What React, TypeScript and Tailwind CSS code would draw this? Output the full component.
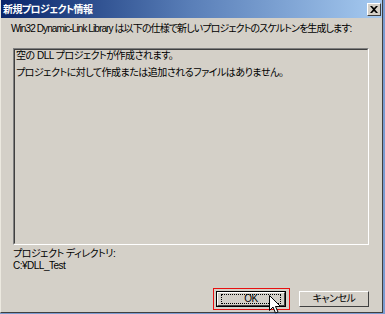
import React from 'react';

const font = "font-['Liberation_Sans','Noto_Sans_CJK_JP',sans-serif] [font-feature-settings:'palt'] text-[10px] leading-[12px] tracking-[-0.5px] text-black";

const CloseButton = () => (
  <div className="w-[14px] h-[13px] bg-[#d4d0c8] border border-t-white border-l-white border-r-[#404040] border-b-[#404040] flex items-center justify-center">
    <svg width="8" height="7" viewBox="0 0 8 7">
      <path d="M0 0 L2 0 L4 2 L6 0 L8 0 L5 3.5 L8 7 L6 7 L4 5 L2 7 L0 7 L3 3.5 Z" fill="#000" />
    </svg>
  </div>
);

const Button = ({ label, active }: { label: string; active?: boolean }) => (
  <div className={`w-[70px] h-[16px] bg-[#d4d0c8] ${active ? 'border border-black' : ''}`}>
    <div className="w-full h-full border border-t-white border-l-white border-r-[#404040] border-b-[#404040] flex items-center justify-center">
      {active ? (
        <div className="w-[60px] h-[10px] border border-dotted border-black flex items-center justify-center">
          <span className={font}>{label}</span>
        </div>
      ) : (
        <span className={font}>{label}</span>
      )}
    </div>
  </div>
);

export default function App() {
  return (
    <div className="relative w-[385px] h-[314px] bg-[#7a9bd0] overflow-hidden">
      <div className="w-[383px] h-[313px] bg-[#d4d0c8] border-l border-l-[#ece9e0] border-r border-r-[#404040] border-b border-b-[#404040] flex flex-col">
        <div className="h-[18px] bg-gradient-to-r from-[#0a246a] via-[#5a7fb8] to-[#a6caf0] flex items-center justify-between pl-[2px] pr-[1px]">
          <span className="font-['Noto_Sans_CJK_JP',sans-serif] [font-feature-settings:'palt'] text-[10px] font-bold text-white tracking-[-0.6px] leading-[12px]">
            新規プロジェクト情報
          </span>
          <CloseButton />
        </div>

        <div className="flex flex-col pl-[10px]">
          <div className={`mt-[5px] h-[12px] whitespace-nowrap ${font} tracking-[-0.9px]`}>
            Win32 Dynamic-Link Library は以下の仕様で新しいプロジェクトのスケルトンを生成します:
          </div>

          <div className="mt-[13px] ml-[2px] w-[356px] h-[197px] border border-t-[#808080] border-l-[#808080] border-r-white border-b-white">
            <div className="w-full h-full border border-t-[#404040] border-l-[#404040] border-r-[#d4d0c8] border-b-[#d4d0c8] flex flex-col pl-[1px]">
              <div className={`h-[12px] whitespace-nowrap ${font}`}>空の DLL プロジェクトが作成されます。</div>
              <div className={`mt-[5px] h-[12px] whitespace-nowrap ${font}`}>
                プロジェクトに対して作成または追加されるファイルはありません。
              </div>
            </div>
          </div>

          <div className={`mt-[3px] ml-[2px] h-[12px] ${font}`}>プロジェクト ディレクトリ:</div>
          <div className={`ml-[2px] h-[12px] ${font}`}>C:¥DLL_Test</div>
        </div>

        <div className="mt-[19px] flex justify-end gap-[13px] pr-[13px]">
          <Button label="OK" active />
          <Button label="キャンセル" />
        </div>
      </div>

      <div className="absolute left-[213px] top-[288px] w-[77px] h-[22px] border border-[#e81010]" />

      <svg className="absolute left-[269px] top-[295px]" width="13" height="20" viewBox="0 0 13 20">
        <path d="M0.5 0.5 L0.5 15.5 L4 12 L6.5 18 L9 17 L6.5 11.5 L11.5 11.5 Z" fill="#fff" stroke="#000" strokeWidth="1" />
      </svg>
    </div>
  );
}
